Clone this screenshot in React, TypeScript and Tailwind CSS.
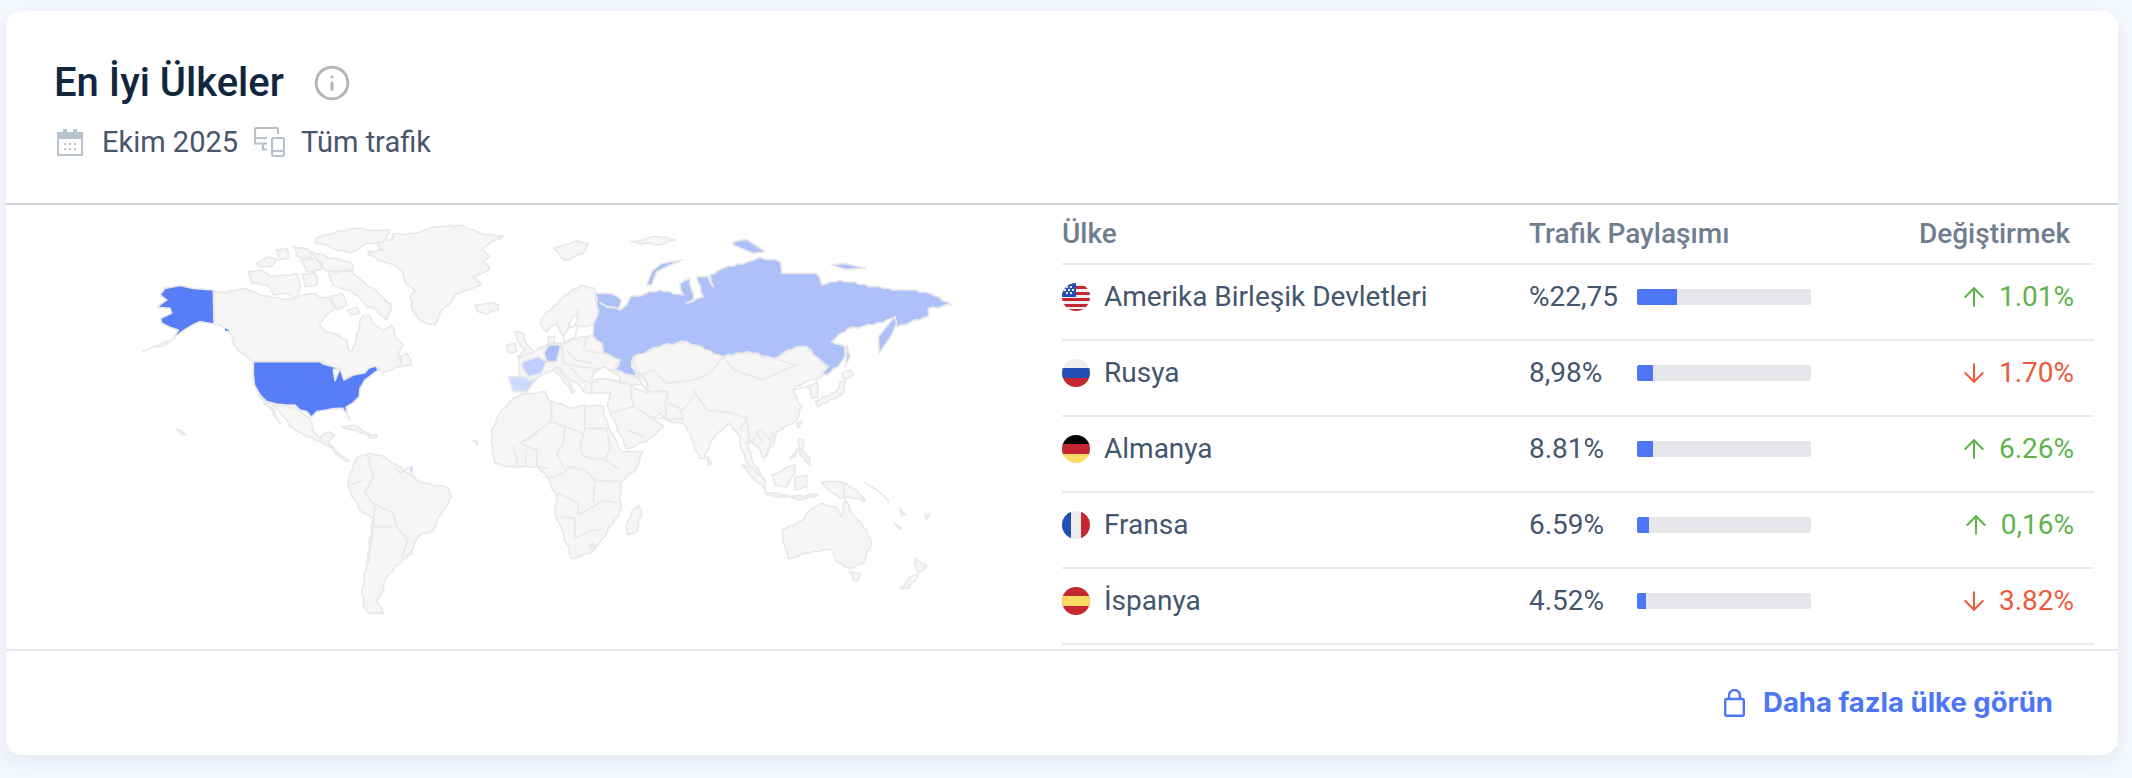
import React from 'react';
import { ArrowDown, ArrowUp, Info } from 'lucide-react';

// map shapes, x/y are in px*3 (west part starts at 120,210 - east part at 520,210)
const westLand = [
  '745,125 790,120 770,100 815,90 820,72 880,70 920,58 960,50 1030,47 1060,60 1085,72 1150,78 1120,92 1100,108 1085,118 1108,140 1090,155 1110,178 1075,195 1058,200 1085,225 1040,240 1010,250 985,285 960,310 945,345 920,340 895,325 875,295 870,260 885,240 860,225 850,190 830,170 790,155 745,135',
  '283,245 320,248 375,235 410,250 455,262 490,268 520,268 550,255 585,250 610,265 625,262 640,285 655,280 625,310 598,345 615,365 640,370 680,390 685,420 695,428 705,400 718,345 730,315 750,318 770,350 790,360 815,345 830,385 850,405 835,440 875,465 830,470 790,490 772,470 740,490 700,495 670,510 660,480 610,455 400,455 385,445 350,415 330,370 315,355 283,342',
  '630,260 665,250 680,285 650,300',
  '680,300 710,290 720,310 695,315',
  '410,160 440,142 470,150 455,170 420,170',
  '385,185 420,180 450,200 490,195 530,190 540,230 535,262 490,250 460,255 440,225 395,220',
  '470,120 500,115 505,145 475,150',
  '520,110 565,118 575,145 530,138',
  '540,150 590,148 605,178 560,185',
  '610,75 640,70 700,55 760,60 810,60 790,95 730,105 710,120 690,130 650,120 620,105 585,100 590,85',
  '625,190 680,182 705,195 730,215 760,235 785,260 815,285 800,330 770,300 740,290 725,270 690,240 640,228',
  '545,192 585,188 592,225 555,230',
  '575,125 640,145 695,158 700,182 620,184',
  '1065,285 1100,280 1135,285 1135,300 1100,312 1075,305',
  '840,440 860,430 875,465 845,465',
  '665,650 700,645 760,680 720,668',
  '745,675 770,675 770,683 745,683',
  '170,658 185,662 195,675 180,670',
  '1060,692 1075,695 1072,705',
  '1160,405 1185,400 1190,425 1165,430',
  '1185,365 1210,370 1215,395 1240,425 1235,440 1195,440 1215,415 1195,395',
  '68,423 120,405 165,385 120,410',
  '415,555 440,578 500,588 540,602 570,625 578,660 600,685 625,665 645,675 625,700 650,725 690,755 675,752 640,720 600,695 560,680 520,655 490,620 465,585 455,590 480,640 445,590',
  '690,790 710,745 750,730 800,745 830,765 900,815 985,835 995,860 965,910 940,960 895,980 870,1030 820,1080 800,1100 790,1140 770,1170 790,1210 750,1210 730,1190 725,1150 740,1060 755,960 760,925 715,895 685,830',
];

const eastLand = [
  '-85,660 -60,610 -20,565 20,550 75,545 85,570 110,580 160,595 190,585 250,590 250,610 280,680 305,725 370,725 350,775 305,815 300,905 245,990 210,1030 155,1045 125,960 105,910 110,860 85,805 50,770 0,772 -30,770 -75,760 -85,700',
  '340,440 430,405 500,395 540,405 610,440 680,425 760,445 830,410 860,410 910,460 925,480 905,500 870,510 825,530 820,545 845,590 830,630 770,665 760,705 730,745 720,720 690,690 680,700 695,745 730,810 690,780 665,720 660,680 630,640 615,650 575,690 555,745 540,745 495,645 440,630 420,610 400,630 430,650 380,695 320,715 290,650 268,600 262,585 272,548 215,548 210,520 250,505 320,520 340,530 380,550 385,520 350,480',
  '285,480 350,500 365,525 320,520 300,510',
  '-5,445 75,410 85,400 125,400 170,385 215,375 245,400 250,430 300,450 285,480 225,475 215,520 215,550 190,545 170,520 150,510 110,470 78,490 30,510 0,500',
  '110,470 140,510 165,545 155,550 125,500 100,480',
  '60,340 70,320 130,260 185,225 225,235 235,320 220,345 195,350 165,345 175,300 150,340 140,380 125,375 110,340 80,365',
  '85,380 105,380 100,400 85,400',
  '100,115 160,95 205,100 190,130 135,150',
  '330,95 370,90 410,78 465,90 420,105',
  '885,575 895,590 970,550 975,515 960,515 950,545',
  '965,490 990,480 1000,495 975,510',
  '865,530 890,515 895,560 875,565',
  '830,640 845,635 835,655',
  '755,670 770,675 760,682',
  '835,685 850,690 845,720 870,745 870,765 840,735',
  '810,745 835,715 825,740',
  '665,765 690,770 735,810 735,840 700,805',
  '735,845 800,855 800,862 740,855',
  '805,858 895,855 835,870',
  '755,795 790,780 825,765 825,790 800,830 765,825',
  '825,800 860,795 860,830 825,840',
  '905,815 960,815 1010,840 1035,875 985,860 960,865 920,835',
  '563,740 575,760 565,765',
  '785,960 850,930 870,900 905,880 945,890 965,920 975,870 1000,915 1040,960 1055,1000 1030,1060 990,1075 950,1055 935,1020 880,1025 805,1045 795,1010',
  '990,1085 1020,1090 1015,1112 1000,1112',
  '1185,1045 1220,1068 1195,1090 1185,1065',
  '1180,1095 1195,1095 1165,1135 1140,1135',
  '355,885 365,900 350,965 325,975 318,950 335,905',
  '1140,895 1155,915 1145,918',
  '1215,915 1230,912 1220,930',
  '1125,940 1145,955 1135,955',
];

const westBorders = [
  '740,730 760,800 735,850 760,880 820,910 830,950 865,990 845,1040',
  '690,825 730,810',
  '765,880 760,950 745,1060',
  '760,950 820,950',
  '825,770 840,790 870,770 880,800',
  '845,1040 880,1030',
  '1150,620 1185,630 1190,700 1115,680',
  '1185,630 1260,680',
  '1115,730 1190,700 1260,720',
  '1180,770 1190,730 1240,740 1235,770',
  '1130,735 1150,770',
  '1210,735 1212,772',
];

const eastBorders = [
  '195,585 195,655 260,655',
  '95,575 95,635 190,670',
  '195,655 180,710 190,740 255,750 270,715 260,655',
  '135,650 130,700 110,730 130,770',
  '55,670 0,700 50,720 50,770 85,775',
  '85,805 130,790 150,770 195,780 225,810 220,880',
  '110,860 115,850 175,880 175,915 220,890 250,870 295,880',
  '125,920 165,925 165,985',
  '165,985 215,960 245,960',
  '255,750 300,780',
  '225,810 300,815',
  '0,700 95,635',
  '-20,705 -5,770',
  '20,720 15,770',
  '210,1005 222,1000 225,1012 215,1018 210,1005',
  '350,500 400,480 440,520 520,510 570,490 610,440',
  '610,440 640,480 730,510 770,490 830,465 760,445',
  '520,540 560,600 640,610 680,625 660,660',
  '330,530 340,590 400,625 440,625 435,580 445,545 385,545',
  '445,580 490,600 525,555',
  '440,630 490,625 480,600',
  '270,610 340,590',
  '320,660 375,680',
  '680,625 690,700 720,660 755,690 740,740',
  '705,660 730,700',
  '140,420 170,450 215,460',
  '125,400 130,460 180,470',
  '200,385 190,420 245,430',
  '150,470 185,510 215,520',
  '180,470 225,475',
  '820,540 865,530',
  '1030,815 1070,840 1105,870 1105,880',
  '970,820 975,865',
];

const eastWater = [
  '220,490 250,470 300,500 300,515 250,505 215,510',
  '350,480 380,520 385,550 365,520',
  '145,355 175,345 165,380 135,395 130,380',
];

const russia = '225,250 270,250 305,270 296,298 262,292 240,278 262,290 300,300 320,285 330,262 420,240 490,255 480,220 510,205 520,270 500,280 550,260 530,200 565,200 580,230 570,195 610,175 700,150 720,142 780,155 785,190 890,190 905,225 960,210 1090,235 1150,240 1170,240 1230,250 1295,285 1225,295 1225,320 1130,350 1115,325 1060,345 985,355 935,395 975,410 975,440 955,470 920,495 905,490 925,470 905,455 860,410 830,410 760,445 680,425 610,440 500,395 430,405 340,440 335,470 350,500 285,480 300,450 250,430 245,400 218,375 225,330 235,300';

const russiaIslands = [
  '1075,380 1125,320 1130,340 1115,375 1078,430',
  '980,405 990,440 975,470 980,440',
  '380,225 395,185 425,160 488,150 440,170 410,185 395,225',
  '640,95 680,88 735,125 700,130 640,105',
  '935,165 975,160 1035,175 975,178',
];

const dots: [number, number][] = [
  [519, 768], [398, 833], [412, 940], [318, 880], [72, 802], [998, 708], [928, 755], [1085, 758], [1142, 806], [1172, 758], [1225, 860], [250, 100], [20, 345],
];

// long coast edges look too clean, break them up a little (straight borders stay straight)
const rough = (pts: string) => {
  const p = pts.split(' ').map((s) => s.split(',').map(Number));
  const out: string[] = [];
  p.forEach(([x, y], i) => {
    const [nx, ny] = p[(i + 1) % p.length];
    const dx = nx - x;
    const dy = ny - y;
    const len = Math.hypot(dx, dy);
    out.push(x + ',' + y);
    if (dx === 0 || dy === 0 || len < 24) return;
    const n = Math.floor(len / 14);
    for (let k = 1; k < n; k++) {
      const j = (((i * 7 + k * 13) % 5) - 2) * 1.6;
      out.push((x + (dx * k) / n - (dy / len) * j).toFixed(1) + ',' + (y + (dy * k) / n + (dx / len) * j).toFixed(1));
    }
  });
  return out.join(' ');
};

const WorldMap = () => (
  <svg width="1056" height="446" viewBox="6 205 1056 446" className="block shrink-0">
    <g transform="translate(120 210) scale(0.3333)" fill="#f6f6f6" stroke="#e8e8e8" strokeWidth="5" strokeLinejoin="round">
      {westLand.map((p) => (
        <polygon key={p} points={rough(p)} />
      ))}
      <g fill="none">
        {westBorders.map((p) => (
          <polyline key={p} points={p} />
        ))}
      </g>
      <polygon points="135,235 180,226 220,235 280,240 282,342 255,338 240,335 218,345 190,362 160,385 175,360 150,352 125,340 122,325 155,310 150,295 112,292 125,280 140,270 120,255" fill="#577ef7" />
      <polygon points="315,355 330,362 315,362" fill="#577ef7" stroke="none" />
      <polygon points="400,455 600,455 610,462 640,470 665,478 640,478 645,512 660,475 672,510 700,495 735,488 745,475 768,468 775,480 755,495 735,510 720,535 718,560 700,578 678,592 682,610 690,630 680,612 668,595 640,596 620,600 590,605 575,622 560,605 540,600 525,585 500,585 470,582 440,575 420,555 403,525 400,490" fill="#577ef7" />
      <polygon points="870,770 878,770 878,785 870,785" fill="#c9d6fc" stroke="none" />
      <polygon points="1165,500 1255,500 1220,545 1180,545" fill="#cfdbfd" />
    </g>
    <g transform="translate(520 210) scale(0.3333)" fill="#f6f6f6" stroke="#e8e8e8" strokeWidth="5" strokeLinejoin="round">
      {eastLand.map((p) => (
        <polygon key={p} points={rough(p)} />
      ))}
      <g fill="none">
        {eastBorders.map((p) => (
          <polyline key={p} points={p} />
        ))}
      </g>
      {eastWater.map((p) => (
        <polygon key={p} points={p} fill="#ffffff" />
      ))}
      <polygon points={rough(russia)} fill="#adc0f9" />
      {russiaIslands.map((p) => (
        <polygon key={p} points={p} fill="#adc0f9" />
      ))}
      <polygon points="85,405 122,405 110,455 80,455 72,430" fill="#a9bdfa" />
      <polygon points="10,455 55,440 78,455 65,490 25,500 5,470" fill="#bfcefc" />
      {dots.map(([x, y]) => (
        <circle key={x + '-' + y} cx={x} cy={y} r="2" stroke="none" fill="#e8e8e8" />
      ))}
    </g>
  </svg>
);

const CalendarIcon = () => (
  <svg width="26" height="27" viewBox="0 0 26 27" fill="none" className="shrink-0">
    <path d="M1 4h24v22H1z" stroke="#b8c1ce" strokeWidth="2" />
    <path d="M1 4h24v6H1zM6 0h4v4H6zM16 0h4v4h-4z" fill="#b8c1ce" />
    <path d="M7 14h2v2H7zM12 14h2v2h-2zM17 14h2v2h-2zM7 19h2v2H7zM12 19h2v2h-2zM17 19h2v2h-2z" fill="#b8c1ce" />
  </svg>
);

const DevicesIcon = () => (
  <svg width="31" height="30" viewBox="0 0 31 30" fill="none" stroke="#b8c1ce" strokeWidth="2.200" className="shrink-0">
    <path d="M24 7V2.500A1.500 1.500 0 0 0 22.500 1H2.500A1.500 1.500 0 0 0 1 2.500V16.500h12" />
    <path d="M1 11h12M9 16.500v6h4" />
    <rect x="18" y="11" width="12" height="18" rx="2" />
    <path d="M18 24h12" />
  </svg>
);

const LockIcon = () => (
  <svg width="21" height="28" viewBox="0 0 21 28" fill="none" stroke="currentColor" strokeWidth="2.400" className="shrink-0">
    <rect x="1.200" y="10" width="18.600" height="16.800" rx="1.500" />
    <path d="M5 10V6.500a5.500 5.500 0 0 1 11 0V10" />
  </svg>
);

const Flag = ({ children }: { children: React.ReactNode }) => (
  <svg width="28" height="28" viewBox="0 0 28 28" className="shrink-0 rounded-full">
    {children}
  </svg>
);

const FlagUS = () => (
  <Flag>
    <rect width="28" height="28" fill="#eeeeee" />
    <path d="M0 3h28v3H0zM0 9h28v3H0zM0 15h28v3H0zM0 21h28v3H0zM0 26h28v2H0z" fill="#c4272f" />
    <rect width="14" height="14" fill="#2250b4" />
    <path d="M4 3h2v2H4zM8 3h2v2H8zM6 6h2v2H6zM10 6h2v2h-2zM2 6h2v2H2zM4 9h2v2H4zM8 9h2v2H8z" fill="#eeeeee" />
  </Flag>
);

const FlagRU = () => (
  <Flag>
    <rect width="28" height="9.500" fill="#eeeeee" />
    <rect y="9" width="28" height="10" fill="#2250b4" />
    <rect y="19" width="28" height="9" fill="#c4272f" />
  </Flag>
);

const FlagDE = () => (
  <Flag>
    <rect width="28" height="9.500" fill="#000000" />
    <rect y="9" width="28" height="10" fill="#c4272f" />
    <rect y="19" width="28" height="9" fill="#fadc65" />
  </Flag>
);

const FlagFR = () => (
  <Flag>
    <rect width="9.500" height="28" fill="#2250b4" />
    <rect x="9" width="10" height="28" fill="#eeeeee" />
    <rect x="19" width="9" height="28" fill="#c4272f" />
  </Flag>
);

const FlagES = () => (
  <Flag>
    <rect width="28" height="28" fill="#c4272f" />
    <rect y="9" width="28" height="10" fill="#fadc65" />
  </Flag>
);

const rows = [
  { name: 'Amerika Birleşik Devletleri', flag: <FlagUS />, share: '%22,75', bar: 40, up: true, change: '1.01%' },
  { name: 'Rusya', flag: <FlagRU />, share: '8,98%', bar: 16, up: false, change: '1.70%' },
  { name: 'Almanya', flag: <FlagDE />, share: '8.81%', bar: 16, up: true, change: '6.26%' },
  { name: 'Fransa', flag: <FlagFR />, share: '6.59%', bar: 12, up: true, change: '0,16%' },
  { name: 'İspanya', flag: <FlagES />, share: '4.52%', bar: 9, up: false, change: '3.82%' },
];

export default function App() {
  return (
    <div className="h-[778px] overflow-hidden bg-[#f4f7fc] pt-[11px] pl-[6px] pr-[14px] [font-family:Roboto,sans-serif]">
      <div className="h-[744px] rounded-[16px] bg-white shadow-[0_6px_16px_rgba(40,60,110,0.07)] flex flex-col">
        {/* Header */}
        <div className="h-[194px] shrink-0 border-b-2 border-[#cdd3d9] pl-[49px] pt-[50px]">
          <div className="flex items-center h-[44px]">
            <h2 className="text-[40px] leading-[44px] font-medium text-[#12263f] -ml-[1px]">En İyi Ülkeler</h2>
            <Info size={38} strokeWidth={1.9} className="ml-[29px] text-[#b5b5b5]" />
          </div>
          <div className="flex items-center mt-[21px] h-[32px] text-[29px] leading-[32px] text-[#47566e]">
            <span className="ml-[2px]"><CalendarIcon /></span>
            <span className="ml-[19px]">Ekim 2025</span>
            <span className="ml-[16px]"><DevicesIcon /></span>
            <span className="ml-[16px]">Tüm trafik</span>
          </div>
        </div>

        {/* Map + table */}
        <div className="h-[446px] shrink-0 border-b-2 border-[#e9e9ef] flex">
          <WorldMap />
          <div className="w-[1032px] shrink-0">
            <div className="h-[60px] border-b-2 border-[#e9e9ef] flex items-center text-[28px] font-medium text-[#6f7e90]">
              <span className="w-[467px]">Ülke</span>
              <span>Trafik Paylaşımı</span>
              <span className="ml-auto pr-[24px]">Değiştirmek</span>
            </div>
            {rows.map((r) => (
              <div key={r.name} className="h-[76px] border-b-2 border-[#e9e9ef] flex items-center text-[28px] text-[#43566e] pb-[11px]">
                <div className="w-[467px] flex items-center gap-[14px]">
                  {r.flag}
                  <span>{r.name}</span>
                </div>
                <span className="w-[108px]">{r.share}</span>
                <div className="w-[174px] h-[16px] rounded-[2px] bg-[#e6e7eb]">
                  <div className="h-full rounded-l-[2px] bg-[#4d76f6]" style={{ width: r.bar }} />
                </div>
                <div className={'ml-auto pr-[20px] flex items-center gap-[10px] ' + (r.up ? 'text-[#5db54a]' : 'text-[#ef5a3c]')}>
                  {r.up ? <ArrowUp size={30} strokeWidth={1.6} /> : <ArrowDown size={30} strokeWidth={1.6} />}
                  <span>{r.change}</span>
                </div>
              </div>
            ))}
          </div>
        </div>

        {/* Footer */}
        <div className="flex-1 flex items-center justify-end pr-[65px] text-[#4d76f6]">
          <LockIcon />
          <span className="ml-[18px] text-[27.5px] font-bold [font-family:Inter,sans-serif]">Daha fazla ülke görün</span>
        </div>
      </div>
    </div>
  );
}
